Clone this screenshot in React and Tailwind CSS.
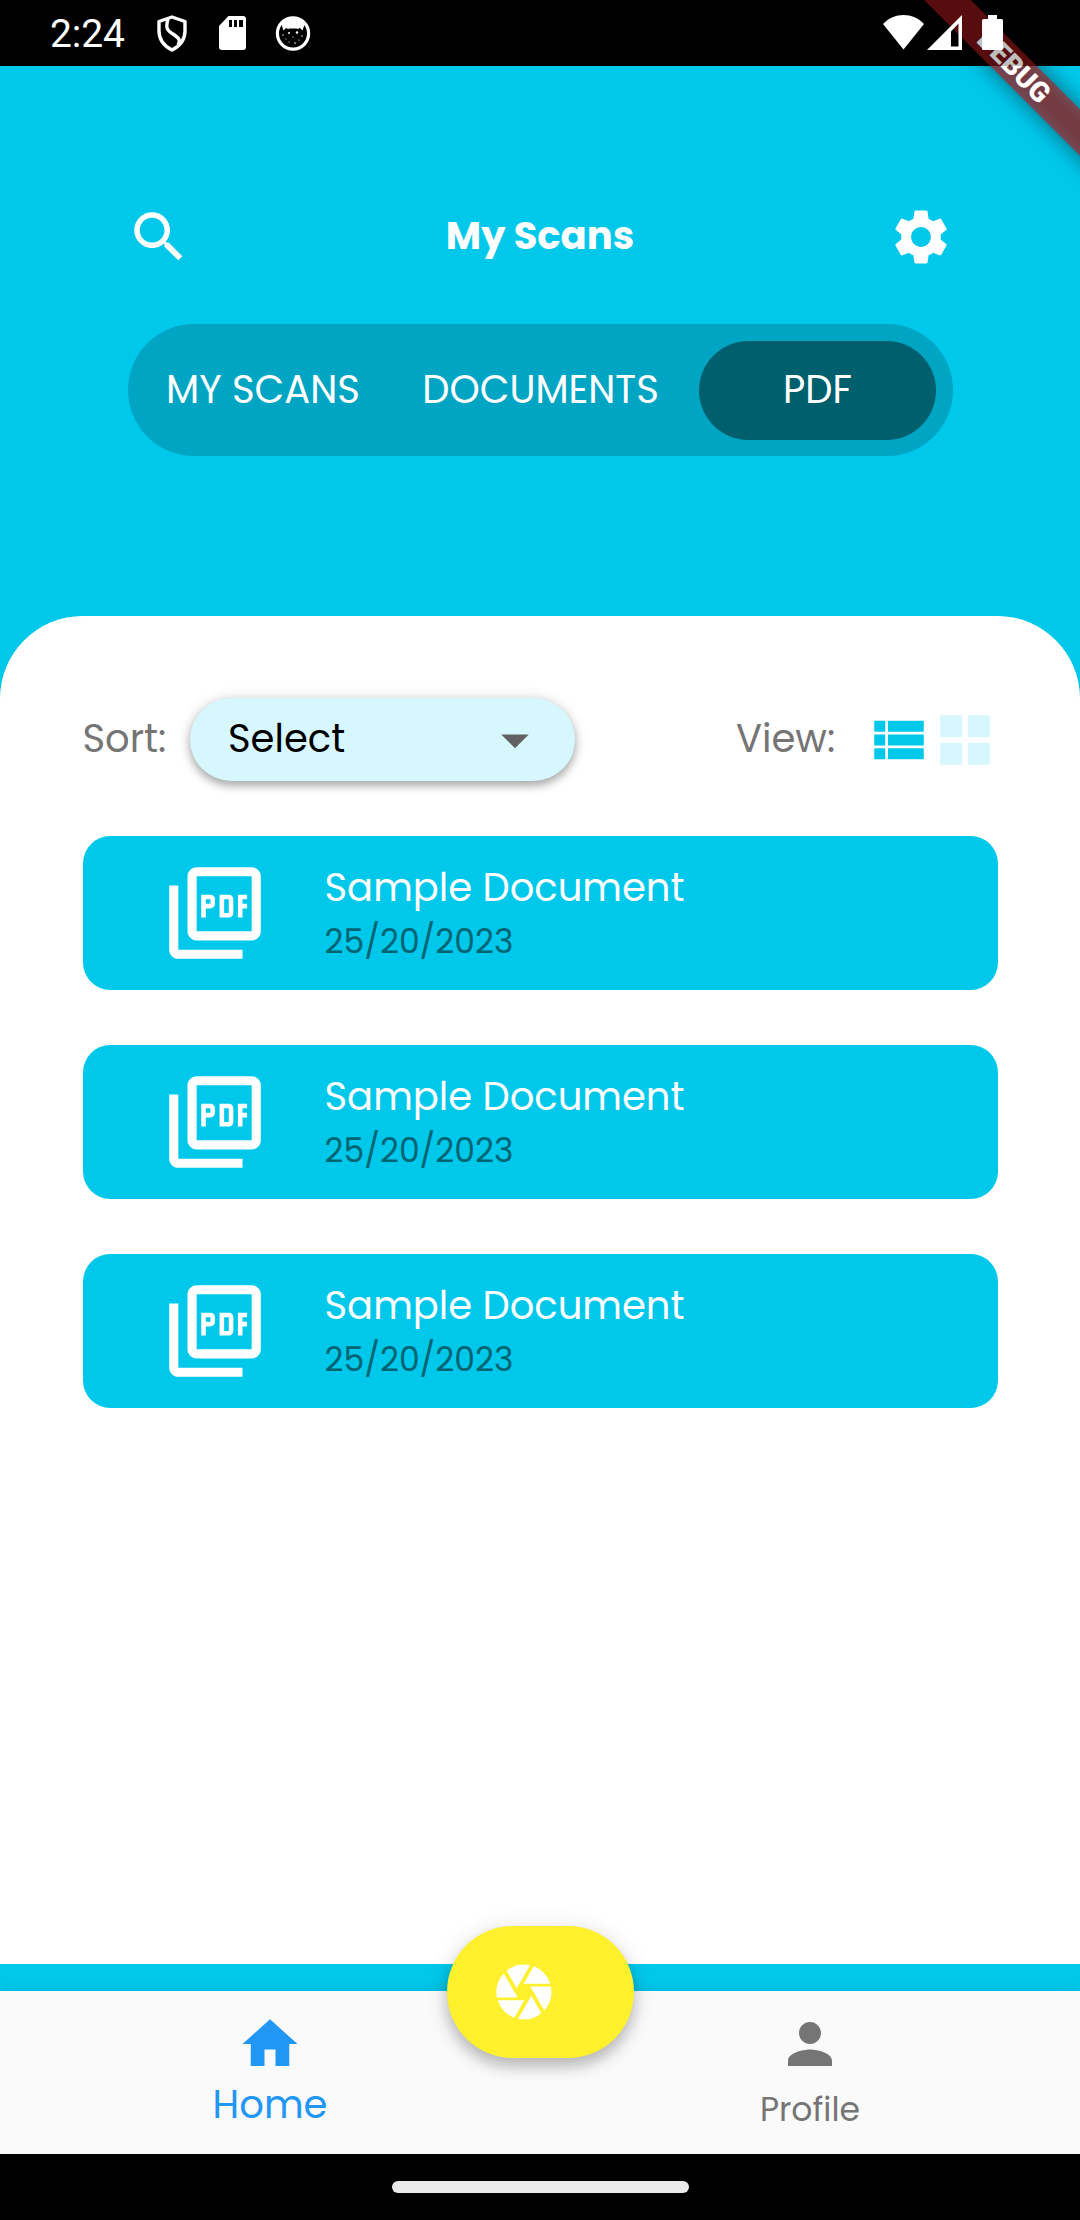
import React from "react";
import {
  MdSearch,
  MdSettings,
  MdOutlinePictureAsPdf,
  MdCamera,
  MdHome,
  MdPerson,
  MdArrowDropDown,
} from "react-icons/md";

function StatusBar() {
  return (
    <div className="relative z-20 flex h-[66px] shrink-0 items-start bg-black/25 font-[Roboto] text-white">
      <span className="ml-[50px] mt-[11px] w-[106px] text-[39px] leading-[46px] tracking-[-0.1px]">2:24</span>
      <svg className="mt-[14px] h-[39px] w-[32px]" viewBox="0 0 32 39" fill="none" stroke="#fff" strokeWidth="3.4" strokeLinejoin="round">
        <path d="M16 3 L29 7.500 V17 C29 26 23 32.500 16 36 C9 32.500 3 26 3 17 V7.500 Z" />
        <path d="M12 5 C9 15 12 17 17 20 C23 24 25 26 22 31" />
      </svg>
      <svg className="ml-[31px] mt-[16px] h-[35px] w-[27px]" viewBox="0 0 27 35">
        <path fill="#fff" d="M9.500 0 H24 a3 3 0 0 1 3 3 V31 a3 3 0 0 1-3 3 H3 a3 3 0 0 1-3-3 V10 Z" />
        <path fill="#000" d="M10 4h3v7h-3zM15 4h3v7h-3zM20 4h4v7h-4z" />
      </svg>
      <svg className="ml-[29px] mt-[15px] h-[36px] w-[36px]" viewBox="0 0 36 36">
        <circle cx="18" cy="18.500" r="15.600" fill="none" stroke="#fff" strokeWidth="3.200" />
        <path fill="#fff" d="M6 8 C12 1 24 1 30 8 L27.500 15.500 L25 13 C23.500 13 23 15 22 13.500 L14 13.500 C13 15 12.500 13 11 13 L8.500 15.500 Z" />
        <g fill="#fff">
          <circle cx="14" cy="18" r="1" />
          <circle cx="22" cy="17.500" r="1.200" />
          <circle cx="8" cy="20" r=".7" />
          <circle cx="27" cy="21" r=".7" />
          <circle cx="11" cy="24" r=".6" />
          <circle cx="18" cy="22" r=".6" />
          <circle cx="20" cy="28" r=".8" />
          <circle cx="14" cy="27" r=".6" />
          <circle cx="24" cy="25" r=".6" />
        </g>
      </svg>
      <svg className="ml-auto mt-[15px] h-[35px] w-[41px]" viewBox="0 0 41 35">
        <path fill="#fff" d="M0 9 C11 -3 30 -3 41 9 L20.500 34.500 Z" />
      </svg>
      <svg className="ml-[3px] mt-[15px] h-[35px] w-[35px]" viewBox="0 0 35 35">
        <path fill="#fff" fillRule="evenodd" d="M35 0 V35 H0 Z M31.500 8.500 L24 16.500 V31.500 H31.500 Z" />
      </svg>
      <svg className="ml-[20px] mr-[77px] mt-[15px] h-[35px] w-[21px]" viewBox="0 0 21 35">
        <path fill="#fff" d="M6 0h9v4h4.500a1.500 1.500 0 0 1 1.500 1.500v28a1.500 1.500 0 0 1-1.500 1.500h-18a1.500 1.500 0 0 1-1.500-1.500v-28a1.500 1.500 0 0 1 1.500-1.500h4.500z" />
      </svg>
    </div>
  );
}

function DebugBanner() {
  return (
    <div className="absolute right-0 top-0 z-10 h-[260px] w-[260px] overflow-hidden">
      <div className="absolute left-[-6px] top-[49.500px] h-[33px] w-[400px] rotate-45 bg-black/50 blur-[11px]" />
      <div className="absolute left-[-6px] top-[49.500px] flex h-[33px] w-[400px] rotate-45 items-center justify-center bg-[#b71c1c]/63 font-[Roboto] text-[28px] leading-[33px] font-black text-white">
        DEBUG
      </div>
    </div>
  );
}

function Header() {
  return (
    <div className="flex h-[550px] shrink-0 flex-col items-center pt-[138px] text-white">
      <div className="flex h-[66px] w-[828px] items-center justify-between">
        <MdSearch className="size-[66px]" />
        <h1 className="-mt-[3px] text-[38.500px] leading-[56px] font-bold">My Scans</h1>
        <MdSettings className="size-[66px]" />
      </div>
      <div className="mt-[54px] flex h-[132px] w-[825px] rounded-full bg-[#00a5c3] p-[16.500px] text-[38.500px] leading-[98px]">
        <div className="w-[238px] text-center">MY SCANS</div>
        <div className="flex-1 text-center">DOCUMENTS</div>
        <div className="w-[237px] rounded-full bg-[#005f6d] text-center">PDF</div>
      </div>
    </div>
  );
}

function Toolbar() {
  return (
    <div className="flex h-[83px] items-center text-[38.500px] leading-[56px] text-[#757575]">
      <span className="-mt-px w-[107.500px]">Sort:</span>
      <div className="flex h-[83px] w-[385px] items-center justify-between rounded-full bg-[#d5f7fd] pl-[38px] pr-[27px] text-black shadow-[0_5px_8px_rgba(0,0,0,0.26),0_1px_14px_rgba(0,0,0,0.16)]">
        <span className="-mt-px">Select</span>
        <MdArrowDropDown className="size-[66px] text-[#616161]" />
      </div>
      <span className="-mt-px ml-[161px] w-[129.500px]">View:</span>
      <svg className="size-[66px]" viewBox="0 0 24 24" fill="#00c8eb">
        <path d="M3 14h4v-4H3zM3 19h4v-4H3zM3 9h4V5H3zM8 14h13v-4H8zM8 19h13v-4H8zM8 5v4h13V5z" />
      </svg>
      <svg className="size-[66px]" viewBox="0 0 24 24" fill="#d5f7fd">
        <path d="M3 3h8v8H3zM13 3h8v8h-8zM3 13h8v8H3zM13 13h8v8h-8z" />
      </svg>
    </div>
  );
}

function DocumentCard({ title, date }) {
  return (
    <div className="flex h-[154px] items-center rounded-[27.500px] bg-[#00c8eb] pl-[77px]">
      <MdOutlinePictureAsPdf className="size-[110px] text-white" />
      <div className="ml-[55px]">
        <div className="text-[38.500px] leading-[56px] text-white">{title}</div>
        <div className="text-[33px] leading-[51px] text-[#006473]">{date}</div>
      </div>
    </div>
  );
}

const documents = [
  { title: "Sample Document", date: "25/20/2023" },
  { title: "Sample Document", date: "25/20/2023" },
  { title: "Sample Document", date: "25/20/2023" },
];

function BottomNav() {
  return (
    <div className="relative flex h-[163px] shrink-0 bg-[#fafafa] shadow-[0_-2px_12px_rgba(0,0,0,0.08)]">
      <div className="flex w-1/2 flex-col items-center pt-[20px] text-[#2196f3]">
        <MdHome className="size-[66px]" />
        <span className="text-[38.500px] leading-[56px]">Home</span>
      </div>
      <div className="flex w-1/2 flex-col items-center pt-[20px] text-[#757575]">
        <MdPerson className="size-[66px]" />
        <span className="mt-[6px] text-[33px] leading-[54px]">Profile</span>
      </div>
      <button className="absolute left-[446.500px] top-[-65.500px] flex h-[132px] w-[187px] items-center rounded-full bg-[#fff02d] pl-[44px] text-white shadow-[0_9px_14px_rgba(0,0,0,0.2),0_3px_24px_rgba(0,0,0,0.12)]">
        <MdCamera className="size-[66px]" />
      </button>
    </div>
  );
}

export default function App() {
  return (
    <div className="relative flex h-[2220px] w-[1080px] flex-col overflow-hidden bg-black font-['Poppins','Inter',sans-serif]">
      <StatusBar />
      <DebugBanner />
      <div className="flex flex-1 flex-col bg-[#00c8eb]">
        <Header />
        <main className="mb-[27px] flex-1 rounded-t-[82.500px] bg-white px-[82.500px] pt-[82px]">
          <Toolbar />
          <div className="mt-[55px] flex flex-col gap-[55px]">
            {documents.map((doc, i) => (
              <DocumentCard key={i} {...doc} />
            ))}
          </div>
        </main>
      </div>
      <BottomNav />
      <div className="flex h-[66px] shrink-0 items-center justify-center bg-black">
        <div className="h-[12px] w-[297px] rounded-full bg-[#eaeaea]" />
      </div>
    </div>
  );
}
